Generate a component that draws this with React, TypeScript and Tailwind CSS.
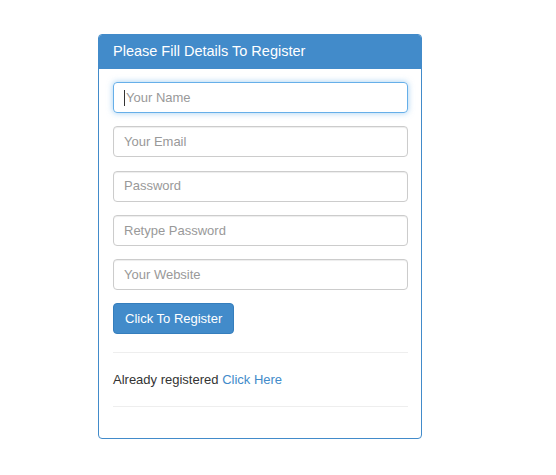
import React from 'react';

const fields = [
  { placeholder: 'Your Name', type: 'text', focused: true },
  { placeholder: 'Your Email', type: 'email' },
  { placeholder: 'Password', type: 'password' },
  { placeholder: 'Retype Password', type: 'password' },
  { placeholder: 'Your Website', type: 'text' },
];

const App = () => {
  return (
    <div
      className="min-h-[475px] bg-white pt-[34px] pl-[98px] text-[13px] text-[#333]"
      style={{ fontFamily: '"Liberation Sans", Arial, sans-serif' }}
    >
      <div className="w-[324px] rounded-[4px] border border-[#428bca] bg-white">
        <div className="flex h-[34px] items-center rounded-t-[3px] bg-[#428bca] px-[14px] text-[14.5px] text-white">
          Please Fill Details To Register
        </div>
        <div className="pl-[14px] pr-[13px] pt-[13px] pb-[31px]">
          <div className="flex flex-col gap-[13.25px]">
            {fields.map((f, i) => (
              <div
                key={i}
                className={
                  f.focused
                    ? 'flex h-[31px] items-center rounded-[4px] border border-[#66afe9] px-[10px] shadow-[0_0_6px_rgba(102,175,233,0.6)]'
                    : 'flex h-[31px] items-center rounded-[4px] border border-[#ccc] px-[10px] shadow-[inset_0_1px_1px_rgba(0,0,0,0.075)]'
                }
              >
                {f.focused && <span className="mr-[1px] h-[16px] w-[1px] bg-[#333]" />}
                <span className="text-[#999]">{f.placeholder}</span>
              </div>
            ))}
          </div>
          <button className="mt-[13px] flex h-[31px] items-center rounded-[4px] border border-[#357ebd] bg-[#428bca] px-[11px] text-white">
            Click To Register
          </button>
          <div className="mt-[18px] border-t border-[#eee]" />
          <div className="flex h-[53px] items-center">
            <span>Already registered&nbsp;</span>
            <a className="text-[#428bca]">Click Here</a>
          </div>
          <div className="border-t border-[#eee]" />
        </div>
      </div>
    </div>
  );
};

export default App;
